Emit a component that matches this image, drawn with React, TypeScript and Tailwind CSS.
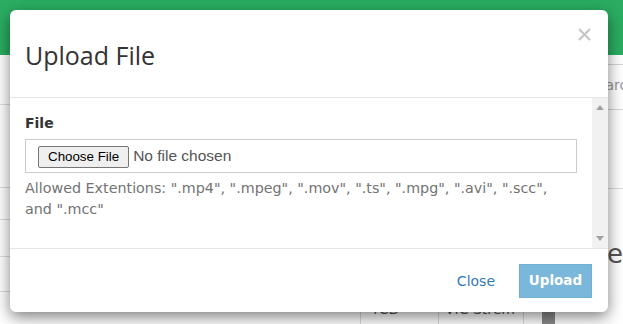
import React from "react";

const rows = [50, 83, 32, 37, 35];

function Backdrop() {
  return (
    <div className="flex h-full flex-col">
      <div className="h-[55px] shrink-0 bg-[#2aad62]" />
      <div className="flex flex-1">
        <div className="flex flex-1 flex-col">
          {rows.map((h, i) => (
            <div key={i} style={{ height: h }} className="border-b border-[#dcdcdc]" />
          ))}
          <div className="flex flex-1 pl-[360px] text-[14px] text-[#555]">
            <div className="w-[79px] border-x border-[#dcdcdc] px-[10px] pt-[7px]">TCD</div>
            <div className="w-[85px] border-r border-[#dcdcdc] px-[6px] pt-[7px]">VIC Strem</div>
            <div className="ml-[18px] w-[13px] bg-[#8a8a8a]" />
          </div>
        </div>
        <div className="flex w-[40px] flex-col">
          <div className="mt-[9px] h-[46px] overflow-hidden whitespace-nowrap border-y border-l border-[#d5d5d5] pl-[4px] pt-[13px] text-[14px] leading-[14px] text-[#999]">
            Search
          </div>
          <div className="mt-[78px] border-t border-[#dcdcdc]" />
          <div className="mt-[50px] -ml-[13px] whitespace-nowrap text-[26px] leading-[30px] text-[#555]">
            Live
          </div>
        </div>
      </div>
    </div>
  );
}

function Scrollbar() {
  return (
    <div className="flex w-[16px] flex-col items-center justify-between bg-[#f1f1f1] py-[7px]">
      <svg width="8" height="5" viewBox="0 0 8 5">
        <path d="M0 5 L4 0 L8 5 Z" fill="#a3a3a3" />
      </svg>
      <svg width="8" height="5" viewBox="0 0 8 5">
        <path d="M0 0 L8 0 L4 5 Z" fill="#a3a3a3" />
      </svg>
    </div>
  );
}

export default function App() {
  return (
    <div className="relative h-[324px] w-[623px] overflow-hidden bg-white font-['DejaVu_Sans',Verdana,sans-serif]">
      <Backdrop />

      {/* modal */}
      <div className="absolute left-[10px] top-[10px] flex h-[302px] w-[598px] flex-col overflow-hidden rounded-[6px] bg-white shadow-[0_5px_15px_rgba(0,0,0,0.5)]">
        <div className="relative h-[88px] shrink-0 border-b border-[#e5e5e5] px-[15px] pt-[28px]">
          <h4 className="font-['Open_Sans',sans-serif] text-[25px] leading-[34px] text-[#333]">Upload File</h4>
          <button className="absolute right-[17px] top-[18px]" aria-label="Close">
            <svg width="13" height="13" viewBox="0 0 13 13">
              <path d="M1 1 L12 12 M12 1 L1 12" stroke="#c6c6c6" strokeWidth="2.2" />
            </svg>
          </button>
        </div>

        <div className="flex h-[150px] shrink-0">
          <div className="flex-1 px-[15px] pt-[15px]">
            <label className="block text-[14px] font-bold leading-[20px] text-[#333]">File</label>
            <div className="mt-[6px] flex h-[34px] items-center border border-[#ccc] px-[12px]">
              <input
                type="file"
                className="font-['Liberation_Sans',Arial,sans-serif] text-[15.5px] text-[#555] file:mr-[4px] file:h-[22px] file:rounded-[2px] file:border file:border-[#767676] file:bg-[#efefef] file:px-[9px] file:font-['Liberation_Sans',Arial,sans-serif] file:text-[13.33px] file:text-black"
              />
            </div>
            <p className="mt-[5px] text-[14.3px] leading-[21px] text-[#737373]">
              Allowed Extentions: ".mp4", ".mpeg", ".mov", ".ts", ".mpg", ".avi", ".scc", and ".mcc"
            </p>
          </div>
          <Scrollbar />
        </div>

        <div className="flex flex-1 items-center justify-end gap-[12px] border-t border-[#e5e5e5] pr-[16px]">
          <button className="px-[12px] py-[6px] text-[14px] leading-[20px] text-[#337ab7]">Close</button>
          <button className="h-[34px] w-[73px] border border-[#70b0d6] bg-[#7ab7db] text-[13.5px] font-bold text-white">
            Upload
          </button>
        </div>
      </div>
    </div>
  );
}
